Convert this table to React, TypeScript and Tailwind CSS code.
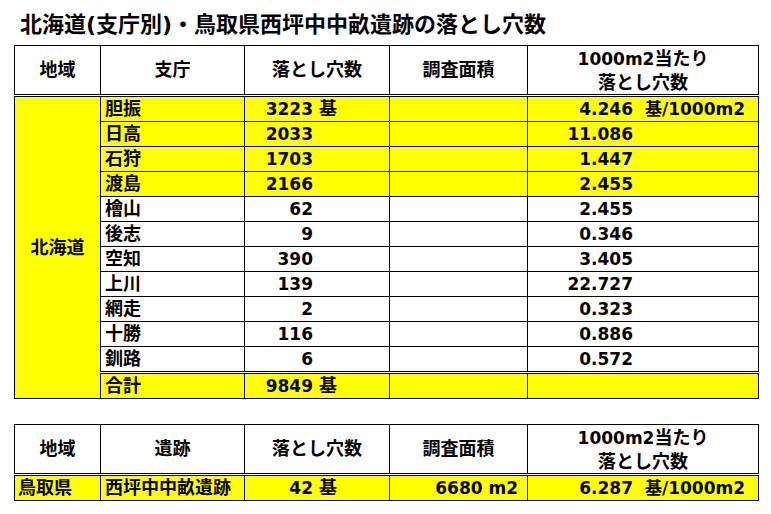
const rows = [
  { name: '胆振', count: '3223', unit: '基', density: '4.246', densityUnit: '基/1000m2', hl: true },
  { name: '日高', count: '2033', density: '11.086', hl: true },
  { name: '石狩', count: '1703', density: '1.447', hl: true },
  { name: '渡島', count: '2166', density: '2.455', hl: true },
  { name: '檜山', count: '62', density: '2.455' },
  { name: '後志', count: '9', density: '0.346' },
  { name: '空知', count: '390', density: '3.405' },
  { name: '上川', count: '139', density: '22.727' },
  { name: '網走', count: '2', density: '0.323' },
  { name: '十勝', count: '116', density: '0.886' },
  { name: '釧路', count: '6', density: '0.572' },
]

function Cols() {
  return (
    <colgroup>
      <col className="w-[86px]" />
      <col className="w-[144px]" />
      <col className="w-[145px]" />
      <col className="w-[138px]" />
      <col className="w-[231px]" />
    </colgroup>
  )
}

function HeaderRow({ second }: { second: string }) {
  return (
    <tr className="h-[50px] border-b-[3px] border-double border-black text-[18px]">
      <th className="border border-black font-bold">地域</th>
      <th className="border border-black font-bold">{second}</th>
      <th className="border border-black font-bold">落とし穴数</th>
      <th className="border border-black font-bold">調査面積</th>
      <th className="border border-black font-bold leading-[23px]">
        <span className="text-[17px]">1000m2</span>当たり
        <br />
        落とし穴数
      </th>
    </tr>
  )
}

function Count({ value, unit }: { value: string; unit?: string }) {
  return (
    <>
      <span className="inline-block w-[68px] text-right">{value}</span>
      {unit && <span className="ml-[6px] text-[18px]">{unit}</span>}
    </>
  )
}

function Density({ value, unit }: { value: string; unit?: string }) {
  return (
    <>
      <span className="inline-block w-[105px] text-right">{value}</span>
      {unit && <span className="ml-[12px]">{unit}</span>}
    </>
  )
}

export default function App() {
  return (
    <div className="w-[771px] h-[514px] bg-white text-black font-['DejaVu_Sans','Noto_Sans_CJK_JP',sans-serif] font-bold">
      <h1 className="pl-[20px] pt-[11px] h-[45px] text-[22px] leading-[28px]">
        北海道(支庁別)・鳥取県西坪中中畝遺跡の落とし穴数
      </h1>

      <div className="pl-[14px]">
        <table className="w-[744px] table-fixed border-collapse text-[17px] leading-[24px]">
          <Cols />
          <tbody>
            <HeaderRow second="支庁" />
            {rows.map((r, i) => (
              <tr key={r.name} className={`h-[25px] ${r.hl ? 'bg-[#ffff00]' : 'bg-white'}`}>
                {i === 0 && (
                  <td rowSpan={12} className="border border-black bg-[#ffff00] text-center text-[18px]">
                    北海道
                  </td>
                )}
                <td className="border border-black pl-[4px] text-[18px]">{r.name}</td>
                <td className="border border-black">
                  <Count value={r.count} unit={r.unit} />
                </td>
                <td className="border border-black" />
                <td className="border border-black">
                  <Density value={r.density} unit={r.densityUnit} />
                </td>
              </tr>
            ))}
            <tr className="h-[25px] bg-[#ffff00] border-t-[3px] border-double border-black">
              <td className="border border-black pl-[4px] text-[18px]">合計</td>
              <td className="border border-black">
                <Count value="9849" unit="基" />
              </td>
              <td className="border border-black" />
              <td className="border border-black" />
            </tr>
          </tbody>
        </table>

        <table className="mt-[25px] w-[744px] table-fixed border-collapse text-[17px] leading-[24px]">
          <Cols />
          <tbody>
            <HeaderRow second="遺跡" />
            <tr className="h-[26px] bg-[#ffff00]">
              <td className="border border-black pl-[3px] text-[18px]">鳥取県</td>
              <td className="border border-black pl-[4px] text-[18px]">西坪中中畝遺跡</td>
              <td className="border border-black">
                <Count value="42" unit="基" />
              </td>
              <td className="border border-black pr-[9px] text-right">6680 m2</td>
              <td className="border border-black">
                <Density value="6.287" unit="基/1000m2" />
              </td>
            </tr>
          </tbody>
        </table>
      </div>
    </div>
  )
}
